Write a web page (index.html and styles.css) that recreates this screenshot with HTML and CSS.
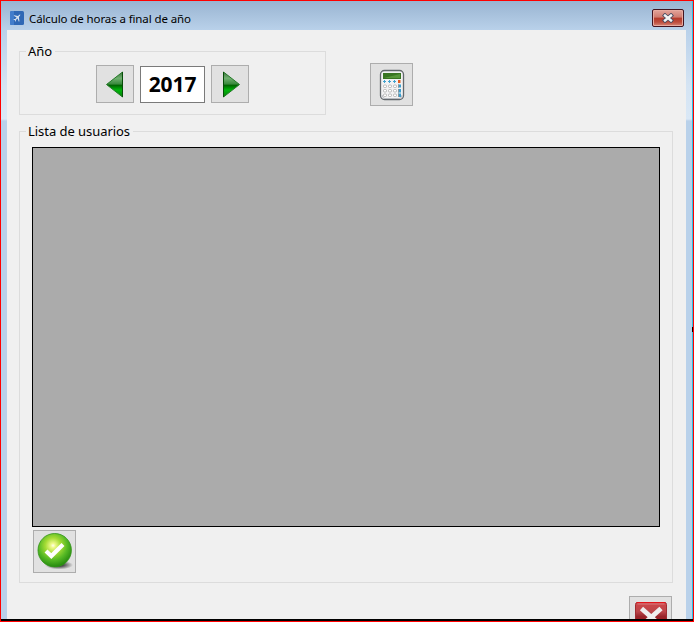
FILE: index.html
```html
<!DOCTYPE html>
<html lang="es">
<head>
<meta charset="utf-8">
<title>Cálculo de horas a final de año</title>
<link rel="stylesheet" href="styles.css">
</head>
<body>
<div class="window">
  <header class="titlebar">
    <svg class="app-icon" width="14" height="14" viewBox="0 0 14 14">
      <rect width="14" height="14" rx="1.5" fill="#2f68b5"/>
      <path d="M0 1.5Q0 0 1.500 0H4V14H1.500Q0 14 0 12.500Z" fill="#427dcb"/>
      <path d="M10.300 3.500L9.300 3.800L8 5L4.200 4.200L3.700 4.700L6.600 6.500L5.200 8L3.800 7.900L3.400 8.400L4.900 9.200L5.600 10.700L6 10.300L5.900 9L7.500 7.500L8.900 10.700L9.400 10.200L8.900 5.900L10.100 4.500Z" fill="#d5e1ee"/>
    </svg>
    <h1 class="title">Cálculo de horas a final de año</h1>
    <button class="window-close" aria-label="Cerrar">
      <svg width="12" height="10" viewBox="0 0 12 10">
        <path d="M3 2.500L9 7.500M9 2.500L3 7.500" stroke="#494b60" stroke-width="4.200" stroke-linecap="square"/>
        <path d="M3 2.500L9 7.500M9 2.500L3 7.500" stroke="#f4f4f4" stroke-width="2.400" stroke-linecap="square"/>
      </svg>
    </button>
  </header>
  <main class="client">
    <div class="top-row">
      <section class="group year-group">
        <h2 class="legend">Año</h2>
        <button class="button step" aria-label="Anterior">
          <svg width="36" height="36" viewBox="0 0 36 36">
            <defs>
              <linearGradient id="green" x1="0" y1="0" x2="0" y2="1">
                <stop offset="0" stop-color="#3b713b"/><stop offset=".25" stop-color="#70b070"/>
                <stop offset=".49" stop-color="#37883a"/><stop offset=".52" stop-color="#006000"/>
                <stop offset=".72" stop-color="#00b50a"/><stop offset="1" stop-color="#087d0b"/>
              </linearGradient>
            </defs>
            <path d="M25.500 6V31L9.500 18.500Z" fill="url(#green)" stroke="#247a28"/>
            <path d="M25.500 6V31" stroke="#064d08"/>
          </svg>
        </button>
        <div class="year">2017</div>
        <button class="button step" aria-label="Siguiente">
          <svg width="36" height="36" viewBox="0 0 36 36">
            <path d="M11.500 6V31L27.500 18.500Z" fill="url(#green)" stroke="#247a28"/>
            <path d="M11.500 6V31" stroke="#064d08"/>
          </svg>
        </button>
      </section>
      <button class="button action calculate" aria-label="Calcular">
        <svg width="41" height="41" viewBox="0 0 41 41">
          <rect x="9.500" y="6.500" width="23" height="29" rx="4" fill="#f2f2f3" stroke="#62676c" stroke-width="1.300"/>
          <path d="M11 31Q11.500 34.500 14 34.500H28Q31 34.500 31 31" fill="none" stroke="#b8bbc0"/>
          <rect x="12" y="9" width="18" height="6" fill="#397522"/>
          <path d="M13 14L29 10V14Z" fill="#57973a"/>
          <path d="M12 17.500h3m2 0h3m2 0h3M13.500 16v3m5-3v3m5-3v3" stroke="#43a3cf" stroke-width="1"/>
          <rect x="27" y="16" width="2.500" height="3" fill="#e15b20"/>
          <g fill="#fff" stroke="#aaa" stroke-width=".8">
            <rect x="12.500" y="21" width="3" height="2.500" rx="1"/><rect x="17.500" y="21" width="3" height="2.500" rx="1"/><rect x="22.500" y="21" width="3" height="2.500" rx="1"/>
            <rect x="12.500" y="25.500" width="3" height="2.500" rx="1"/><rect x="17.500" y="25.500" width="3" height="2.500" rx="1"/><rect x="22.500" y="25.500" width="3" height="2.500" rx="1"/>
            <rect x="12.500" y="30" width="3" height="2.500" rx="1"/><rect x="17.500" y="30" width="3" height="2.500" rx="1"/><rect x="22.500" y="30" width="3" height="2.500" rx="1"/>
          </g>
          <path d="M27 20.500h3v3h-3zm0 4.500h3v3.500h-3zm0 4.500h3v3.500h-3z" fill="#3c9dcc"/>
          <path d="M27 20.500h1v3h-1zm0 4.500h1v3.500h-1zm0 4.500h1v3.500h-1z" fill="#8b979d"/>
        </svg>
      </button>
    </div>
    <section class="group users-group">
      <h2 class="legend">Lista de usuarios</h2>
      <div class="user-grid"></div>
      <button class="button action" aria-label="Aceptar">
        <svg width="41" height="41" viewBox="0 0 41 41">
          <defs>
            <radialGradient id="ball" cx=".45" cy=".36" r=".66">
              <stop offset="0" stop-color="#fffff0"/><stop offset=".1" stop-color="#eff98b"/>
              <stop offset=".35" stop-color="#a5dc35"/><stop offset=".65" stop-color="#56b925"/>
              <stop offset="1" stop-color="#20850c"/>
            </radialGradient>
            <radialGradient id="shadow">
              <stop offset=".3" stop-color="#222" stop-opacity=".8"/><stop offset="1" stop-color="#222" stop-opacity="0"/>
            </radialGradient>
          </defs>
          <ellipse cx="25" cy="34" rx="14" ry="4.500" fill="url(#shadow)"/>
          <circle cx="20.700" cy="19.200" r="16.700" fill="url(#ball)" stroke="#329319" stroke-width=".8"/>
          <path d="M12 20L17.300 25L29 13.500" fill="none" stroke="#fff" stroke-width="4.200"/>
        </svg>
      </button>
    </section>
    <footer class="footer">
      <button class="button action" aria-label="Salir">
        <svg width="41" height="41" viewBox="0 0 41 41">
          <defs>
            <linearGradient id="red" x1="0" y1="0" x2="0" y2="1">
              <stop offset="0" stop-color="#d0474a"/><stop offset=".3" stop-color="#bb4549"/>
              <stop offset=".45" stop-color="#98252b"/><stop offset="1" stop-color="#c80000"/>
            </linearGradient>
          </defs>
          <rect x="5.500" y="5.500" width="31" height="31" rx="2" fill="url(#red)" stroke="#a02d32"/>
          <path d="M6.500 5.500H35.500" stroke="#e3141a"/>
          <path d="M7.500 7H34.500" stroke="#d77b7e"/>
          <path d="M11.500 11.500L30 28M31 11.500L12.500 28" stroke="#f0eeee" stroke-width="4.800"/>
        </svg>
      </button>
    </footer>
  </main>
  <div class="edge-mark"></div>
</div>
</body>
</html>
```
FILE: styles.css
```css
* { box-sizing: border-box; }

body {
  margin: 0;
  font-family: "Noto Sans", "Open Sans", sans-serif;
  color: #000;
}

h1, h2 { margin: 0; font-weight: 400; }

button { padding: 0; font: inherit; }

svg { display: block; }

.window {
  position: relative;
  display: flex;
  flex-direction: column;
  width: 694px;
  height: 622px;
  overflow: hidden;
  border: 1px solid #f00;
  padding: 0 6px;
  background: linear-gradient(#99b4d1 0, #b9d1ea 29px, #d5e4f3 85px, #dae8f6 118px, #b9d1ea 120px);
  box-shadow: inset 0 -2px #000;
}

.window::after {
  content: "";
  position: absolute;
  top: 0;
  right: 0;
  bottom: 2px;
  width: 1px;
  background: #2bbfe3;
}

.titlebar {
  display: flex;
  flex: none;
  align-items: flex-start;
  height: 29px;
  padding: 8px 3px 0;
}

.app-icon { flex: none; margin-top: 2px; }

.title {
  margin: 1px 0 0 5px;
  font-size: 11.5px;
  line-height: 18px;
  letter-spacing: -0.11px;
  white-space: nowrap;
}

.window-close {
  display: flex;
  align-items: center;
  justify-content: center;
  width: 32px;
  height: 18px;
  margin-left: auto;
  border: 1px solid #431420;
  border-radius: 2px;
  background: linear-gradient(#e3a59b, #cf7b70 45%, #b53a2b 50%, #bd4b3b 75%, #d68676);
  box-shadow: inset 0 0 0 1px #e7aaa0;
}

.client {
  flex: none;
  width: 679px;
  height: 589px;
  padding: 21px 13px 0 12px;
  overflow: hidden;
  background: #f0f0f0;
}

.top-row { display: flex; align-items: flex-start; }

.group {
  position: relative;
  border: 1px solid #dcdcdc;
}

.legend {
  position: absolute;
  top: -10px;
  left: 6px;
  padding: 0 3px 0 2px;
  background: #f0f0f0;
  font-size: 13px;
  line-height: 18px;
  letter-spacing: -0.05px;
  white-space: nowrap;
}

.year-group {
  display: flex;
  width: 307px;
  height: 64px;
  padding: 13px 0 0 76px;
}

.button {
  flex: none;
  border: 1px solid #adadad;
  background: #e1e1e1;
}

.step { width: 38px; height: 38px; }

.year {
  width: 65px;
  height: 37px;
  margin: 1px 6px 0;
  border: 1px solid #7a7a7a;
  background: #fff;
  font-size: 21px;
  font-weight: 700;
  line-height: 35px;
  letter-spacing: -0.1px;
  text-align: center;
}

.action { display: block; width: 43px; height: 43px; }

.calculate { margin: 12px 0 0 44px; }

.users-group {
  width: 654px;
  height: 452px;
  margin-top: 16px;
  padding: 15px 12px 0;
}

.user-grid {
  width: 628px;
  height: 380px;
  border: 1px solid #000;
  background: #ababab;
}

.users-group .action { margin: 3px 0 0 1px; }

.footer {
  display: flex;
  justify-content: flex-end;
  padding: 13px 1px 0 0;
}

.edge-mark {
  position: absolute;
  z-index: 1;
  top: 326px;
  right: 0;
  width: 1px;
  height: 5px;
  background: #000;
}
```
